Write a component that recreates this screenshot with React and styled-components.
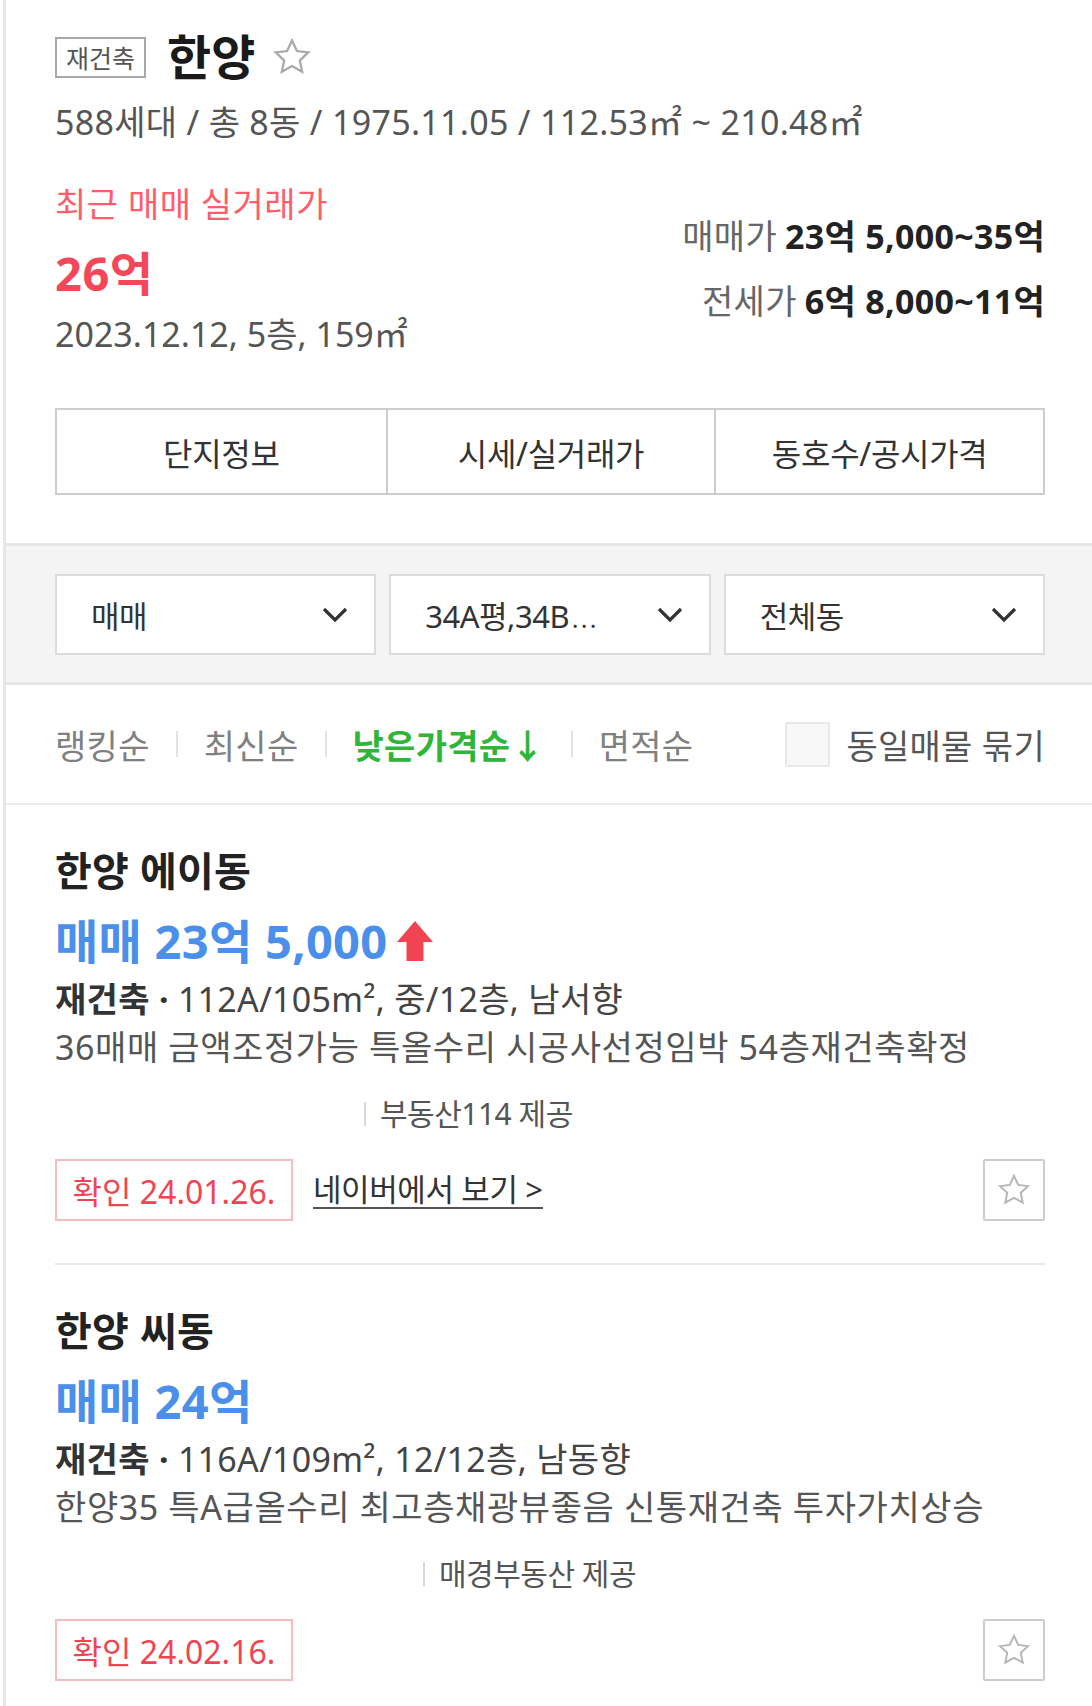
import React from "react";
import styled, { createGlobalStyle } from "styled-components";

const GlobalStyle = createGlobalStyle`
  html, body {
    margin: 0;
    padding: 0;
    background: #fff;
  }
  body {
    font-family: "Noto Sans", "Noto Sans CJK KR", sans-serif;
    color: #333;
  }
`;

const Page = styled.div`
  width: 1089px;
  margin-left: 3px;
  border-left: 3px solid #e6e6e6;
  min-height: 1706px;
  box-sizing: border-box;
`;

const Header = styled.section`
  padding: 34px 47px 48px 49px;
  border-bottom: 3px solid #e6e6e6;
`;

const TitleRow = styled.div`
  display: flex;
  align-items: center;
  height: 46px;
`;

const Tag = styled.span`
  display: inline-flex;
  align-items: center;
  justify-content: center;
  box-sizing: border-box;
  width: 91px;
  height: 41px;
  border: 2px solid #a8a8a8;
  font-size: 25px;
  color: #555;
`;

const Title = styled.h1`
  margin: 0 16px 0 21px;
  font-size: 48px;
  font-weight: 700;
  color: #1a1a1a;
  line-height: 46px;
`;

const Sub = styled.div`
  margin-top: 22px;
  font-size: 34px;
  line-height: 40px;
  color: #555;
  letter-spacing: 0.3px;
`;

const PriceBlock = styled.div`
  display: flex;
  justify-content: space-between;
  margin-top: 42px;
`;

const LeftCol = styled.div`
  display: flex;
  flex-direction: column;
`;

const RecentLabel = styled.div`
  font-size: 34px;
  line-height: 40px;
  color: #ff5c6c;
  letter-spacing: 0.5px;
`;

const RecentPrice = styled.div`
  margin-top: 21px;
  font-size: 47px;
  line-height: 56px;
  font-weight: 700;
  color: #f5475a;
  letter-spacing: 0.5px;
`;

const RecentInfo = styled.div`
  margin-top: 13px;
  font-size: 34px;
  line-height: 40px;
  color: #555;
`;

const RightCol = styled.div`
  display: flex;
  flex-direction: column;
  align-items: flex-end;
  gap: 25px;
  padding-top: 32px;
`;

const RangeLine = styled.div`
  font-size: 34px;
  line-height: 40px;
  color: #222;
  font-weight: 700;
  letter-spacing: 0.3px;
  & span {
    font-weight: 400;
    color: #666;
    margin-right: 8px;
  }
`;

const Tabs = styled.div`
  display: grid;
  grid-template-columns: repeat(3, 1fr);
  margin-top: 54px;
  border: 2px solid #cdcdcd;
  height: 87px;
  box-sizing: border-box;
`;

const TabCell = styled.div`
  display: flex;
  align-items: center;
  justify-content: center;
  font-size: 32px;
  color: #333;
  letter-spacing: -0.3px;
  border-left: ${(p) => (p.first ? "none" : "2px solid #cdcdcd")};
`;

const FilterBand = styled.div`
  display: grid;
  grid-template-columns: repeat(3, 1fr);
  gap: 13px;
  padding: 28px 47px 27px 49px;
  background: #f4f4f4;
  border-bottom: 3px solid #e6e6e6;
`;

const Select = styled.div`
  display: flex;
  align-items: center;
  justify-content: space-between;
  height: 81px;
  box-sizing: border-box;
  padding: 0 25px 0 34px;
  background: #fff;
  border: 2px solid #dcdcdc;
  font-size: 31px;
  color: #333;
  letter-spacing: -0.5px;
`;

const Ellipsis = styled.span`
  font-family: "Noto Sans CJK KR", sans-serif;
  font-size: 24px;
  letter-spacing: -2px;
  margin-left: 2px;
`;

const SortRow = styled.div`
  display: flex;
  align-items: center;
  height: 118px;
  padding: 0 47px 0 49px;
  border-bottom: 2px solid #ececec;
`;

const SortItem = styled.span`
  font-size: 34px;
  color: ${(p) => (p.active ? "#2fb53a" : "#808080")};
  font-weight: ${(p) => (p.active ? 700 : 400)};
  letter-spacing: 0.3px;
`;

const SortSep = styled.span`
  width: 2px;
  height: 26px;
  background: #e2e2e2;
  margin: 0 26px;
`;

const Grouping = styled.label`
  margin-left: auto;
  display: flex;
  align-items: center;
  gap: 16px;
  font-size: 34px;
  color: #555;
  letter-spacing: 0.3px;
`;

const CheckBox = styled.span`
  width: 45px;
  height: 45px;
  box-sizing: border-box;
  border: 2px solid #e8e8e8;
  background: #f8f8f8;
  border-radius: 2px;
`;

const List = styled.div`
  padding: 0 47px 0 49px;
`;

const Item = styled.article`
  padding: 38px 0 ${(p) => (p.last ? "24px" : "42px")};
  border-bottom: ${(p) => (p.last ? "none" : "2px solid #e9e9e9")};
  & + & {
    padding-top: 38px;
  }
`;

const ItemTitle = styled.div`
  font-size: 40px;
  line-height: 56px;
  font-weight: 700;
  color: #222;
  letter-spacing: 0.3px;
`;

const ItemPrice = styled.div`
  display: flex;
  align-items: center;
  gap: 10px;
  margin-top: 20px;
  font-size: 47px;
  line-height: 44px;
  font-weight: 700;
  color: #4a8fea;
  letter-spacing: 0.3px;
`;

const ItemSpec = styled.div`
  margin-top: 16px;
  font-size: 34px;
  line-height: 40px;
  color: #444;
  letter-spacing: 0.3px;
  & b {
    color: #333;
  }
`;

const ItemDesc = styled.div`
  margin-top: 8px;
  font-size: 34px;
  line-height: 40px;
  color: #555;
  letter-spacing: 0.6px;
  white-space: nowrap;
`;

const Provider = styled.div`
  display: flex;
  align-items: center;
  margin-top: 27px;
  padding-left: ${(p) => p.indent}px;
  font-size: 30px;
  line-height: 40px;
  color: #555;
  letter-spacing: -0.5px;
  &::before {
    content: "";
    width: 2px;
    height: 24px;
    background: #d8d8d8;
    margin-right: 14px;
  }
`;

const Footer = styled.div`
  display: flex;
  align-items: center;
  margin-top: 25px;
`;

const Confirm = styled.span`
  display: inline-flex;
  align-items: center;
  justify-content: center;
  box-sizing: border-box;
  width: 238px;
  height: 62px;
  border: 2px solid #f7bcc2;
  font-size: 32px;
  color: #f04452;
`;

const NaverLink = styled.a`
  margin-left: 20px;
  font-size: 31px;
  color: #333;
  letter-spacing: -0.4px;
  text-decoration: none;
  border-bottom: 2px solid #555;
  line-height: 36px;
`;

const StarButton = styled.button`
  margin-left: auto;
  display: flex;
  align-items: center;
  justify-content: center;
  width: 62px;
  height: 62px;
  padding: 0;
  background: #fff;
  border: 2px solid #cccccc;
  border-radius: 2px;
`;

const StarIcon = ({ size = 36, color = "#b5b5b5" }) => (
  <svg width={size} height={size} viewBox="0 0 24 24" fill="none">
    <path
      d="M12 2.6l2.8 6 6.5.8-4.8 4.5 1.3 6.5L12 17.2l-5.8 3.2 1.3-6.5L2.7 9.4l6.5-.8z"
      stroke={color}
      strokeWidth="1.3"
      strokeLinejoin="miter"
    />
  </svg>
);

const Chevron = () => (
  <svg width="28" height="18" viewBox="0 0 28 18" fill="none">
    <path d="M3 3l11 11L25 3" stroke="#333" strokeWidth="3.2" />
  </svg>
);

const UpArrow = () => (
  <svg width="36" height="40" viewBox="0 0 36 40">
    <path d="M18 0L36 21H26.5V40H9.5V21H0z" fill="#f04452" />
  </svg>
);

const listings = [
  {
    id: 1,
    name: "한양 에이동",
    price: "매매 23억 5,000",
    up: true,
    spec: "112A/105m², 중/12층, 남서향",
    desc: "36매매 금액조정가능 특올수리 시공사선정임박 54층재건축확정",
    provider: "부동산114 제공",
    indent: 309,
    confirm: "확인 24.01.26.",
    naver: true,
  },
  {
    id: 2,
    name: "한양 씨동",
    price: "매매 24억",
    up: false,
    spec: "116A/109m², 12/12층, 남동향",
    desc: "한양35 특A급올수리 최고층채광뷰좋음 신통재건축 투자가치상승",
    provider: "매경부동산 제공",
    indent: 368,
    confirm: "확인 24.02.16.",
    naver: false,
  },
];

const App = () => {
  return (
    <Page>
      <GlobalStyle />
      <Header>
        <TitleRow>
          <Tag>재건축</Tag>
          <Title>한양</Title>
          <StarIcon size={42} color="#a9a9a9" />
        </TitleRow>
        <Sub>588세대 / 총 8동 / 1975.11.05 / 112.53㎡ ~ 210.48㎡</Sub>
        <PriceBlock>
          <LeftCol>
            <RecentLabel>최근 매매 실거래가</RecentLabel>
            <RecentPrice>26억</RecentPrice>
            <RecentInfo>2023.12.12, 5층, 159㎡</RecentInfo>
          </LeftCol>
          <RightCol>
            <RangeLine>
              <span>매매가</span>23억 5,000~35억
            </RangeLine>
            <RangeLine>
              <span>전세가</span>6억 8,000~11억
            </RangeLine>
          </RightCol>
        </PriceBlock>
        <Tabs>
          <TabCell first>단지정보</TabCell>
          <TabCell>시세/실거래가</TabCell>
          <TabCell>동호수/공시가격</TabCell>
        </Tabs>
      </Header>

      <FilterBand>
        <Select>
          매매 <Chevron />
        </Select>
        <Select>
          <span>
            34A평,34B<Ellipsis>⋯</Ellipsis>
          </span>
          <Chevron />
        </Select>
        <Select>
          전체동 <Chevron />
        </Select>
      </FilterBand>

      <SortRow>
        <SortItem>랭킹순</SortItem>
        <SortSep />
        <SortItem>최신순</SortItem>
        <SortSep />
        <SortItem active>낮은가격순↓</SortItem>
        <SortSep />
        <SortItem>면적순</SortItem>
        <Grouping>
          <CheckBox />
          동일매물 묶기
        </Grouping>
      </SortRow>

      <List>
        {listings.map((item, i) => (
          <Item key={item.id} last={i === listings.length - 1}>
            <ItemTitle>{item.name}</ItemTitle>
            <ItemPrice>
              {item.price}
              {item.up && <UpArrow />}
            </ItemPrice>
            <ItemSpec>
              <b>재건축 · </b>
              {item.spec}
            </ItemSpec>
            <ItemDesc>{item.desc}</ItemDesc>
            <Provider indent={item.indent}>{item.provider}</Provider>
            <Footer>
              <Confirm>{item.confirm}</Confirm>
              {item.naver && <NaverLink href="#">네이버에서 보기 &gt;</NaverLink>}
              <StarButton>
                <StarIcon size={36} />
              </StarButton>
            </Footer>
          </Item>
        ))}
      </List>
    </Page>
  );
};

export default App;
